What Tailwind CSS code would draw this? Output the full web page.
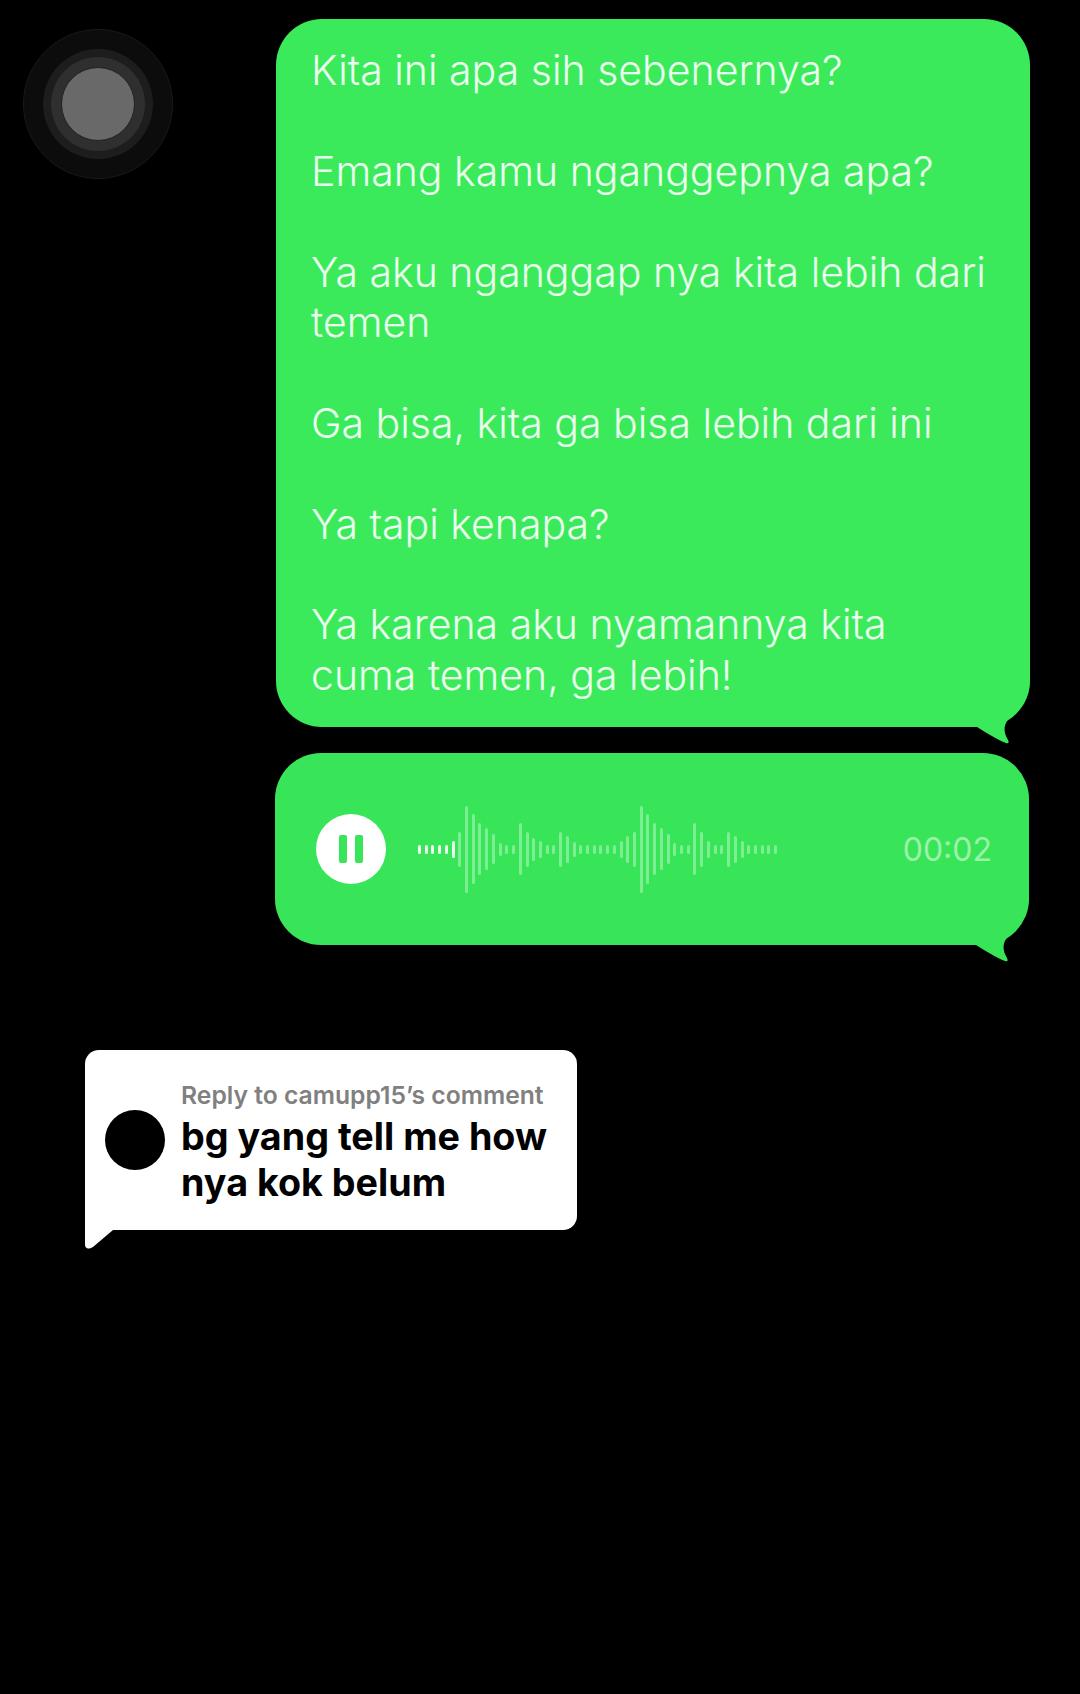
<!DOCTYPE html>
<html lang="id">
<head>
    <meta charset="UTF-8">
    <meta name="viewport" content="width=device-width, initial-scale=1.0">
    <title>Chat</title>
    <script src="https://cdn.jsdelivr.net/npm/@tailwindcss/browser@4"></script>
</head>
<body class="bg-black">
<div class="relative w-[1080px] h-[1694px] overflow-hidden bg-black font-['Inter',sans-serif]">

    <!-- floating assistive touch button -->
    <div class="absolute left-[23px] top-[29px] w-[150px] h-[150px] rounded-full bg-[#0c0c0c] border border-[#191919] flex items-center justify-center">
        <div class="w-[110px] h-[110px] rounded-full bg-[#1d1d1d] flex items-center justify-center">
            <div class="w-[94px] h-[94px] rounded-full bg-[#2f2f2f] flex items-center justify-center">
                <div class="w-[74px] h-[74px] rounded-full bg-[#696969] border border-[#222]"></div>
            </div>
        </div>
    </div>

    <div class="flex flex-col items-start pl-[276px] pt-[19px] gap-[26px]">
        <!-- text bubble -->
        <div class="relative w-[754px] h-[708px] rounded-[46px] bg-[#3aea5a] pl-[35px] pt-[26px]">
            <div class="flex flex-col gap-[50.4px] text-[41px] font-[350] leading-[50.4px] text-white/90 whitespace-nowrap">
                <p>Kita ini apa sih sebenernya?</p>
                <p>Emang kamu nganggepnya apa?</p>
                <p>Ya aku nganggap nya kita lebih dari<br>temen</p>
                <p>Ga bisa, kita ga bisa lebih dari ini</p>
                <p>Ya tapi kenapa?</p>
                <p>Ya karena aku nyamannya kita<br>cuma temen, ga lebih!</p>
            </div>
            <svg class="absolute right-0 top-[661px]" width="70" height="66" viewBox="0 0 70 66">
                <path d="M0 47H17C25 52 38 60 46 63C49 64 49 62 48 60C42 50 44 42 53 35C62 28 68 15 70 0H0Z" fill="#3aea5a"/>
            </svg>
        </div>

        <!-- voice note bubble -->
        <div class="relative w-[754px] h-[192px] rounded-[46px] bg-[#39e558] flex items-center pl-[41px] -ml-px">
            <div class="w-[70px] h-[70px] rounded-full bg-white flex items-center justify-center gap-[8px] shrink-0">
                <span class="w-[8px] h-[28px] rounded-[2px] bg-[#39e558]"></span>
                <span class="w-[8px] h-[28px] rounded-[2px] bg-[#39e558]"></span>
            </div>
            <div id="wave" class="ml-[32px] flex items-center gap-[3.73px] h-[90px]"></div>
            <span class="absolute right-[37px] top-[79px] text-[32px] leading-[36px] text-white/50">00:02</span>
            <svg class="absolute right-0 top-[145px]" width="70" height="66" viewBox="0 0 70 66">
                <path d="M0 47H17C25 52 38 60 46 63C49 64 49 62 48 60C42 50 44 42 53 35C62 28 68 15 70 0H0Z" fill="#39e558"/>
            </svg>
        </div>
    </div>

    <!-- comment reply card -->
    <div class="relative ml-[85px] mt-[105px] w-[492px] h-[180px] rounded-[14px] rounded-bl-none bg-white flex items-center pl-[20px]">
        <div class="w-[60px] h-[60px] rounded-full bg-black shrink-0"></div>
        <div class="ml-[16px] mt-[4px]">
            <p class="text-[24.7px] leading-[32px] font-semibold text-[#808080] whitespace-nowrap">Reply to camupp15’s comment</p>
            <p class="text-[37.7px] leading-[45.5px] font-bold text-black mt-[3px] whitespace-nowrap">bg yang tell me how<br>nya kok belum</p>
        </div>
        <svg class="absolute left-0 top-[170px]" width="40" height="50" viewBox="0 0 40 50">
            <path d="M0 0H28V10L8 27C5 29 0 30 0 24Z" fill="#fff"/>
        </svg>
    </div>
</div>

<script>
    // bar heights of the voice note, left to right
    const heights = [9,9,9,9,9,17,35,87,70,52,42,30,13,9,9,52,35,23,17,9,9,35,27,15,9,9,9,9,9,9,17,27,35,87,70,52,42,30,13,9,9,52,35,17,9,9,35,27,17,9,9,9,9,9];
    const wave = document.getElementById("wave");
    heights.forEach((h, i) => {
        const bar = document.createElement("span");
        bar.className = i < 6 ? "w-[3px] rounded-full bg-white/90" : "w-[3px] rounded-full bg-white/35";
        bar.style.height = h + "px";
        wave.appendChild(bar);
    });
</script>
</body>
</html>
